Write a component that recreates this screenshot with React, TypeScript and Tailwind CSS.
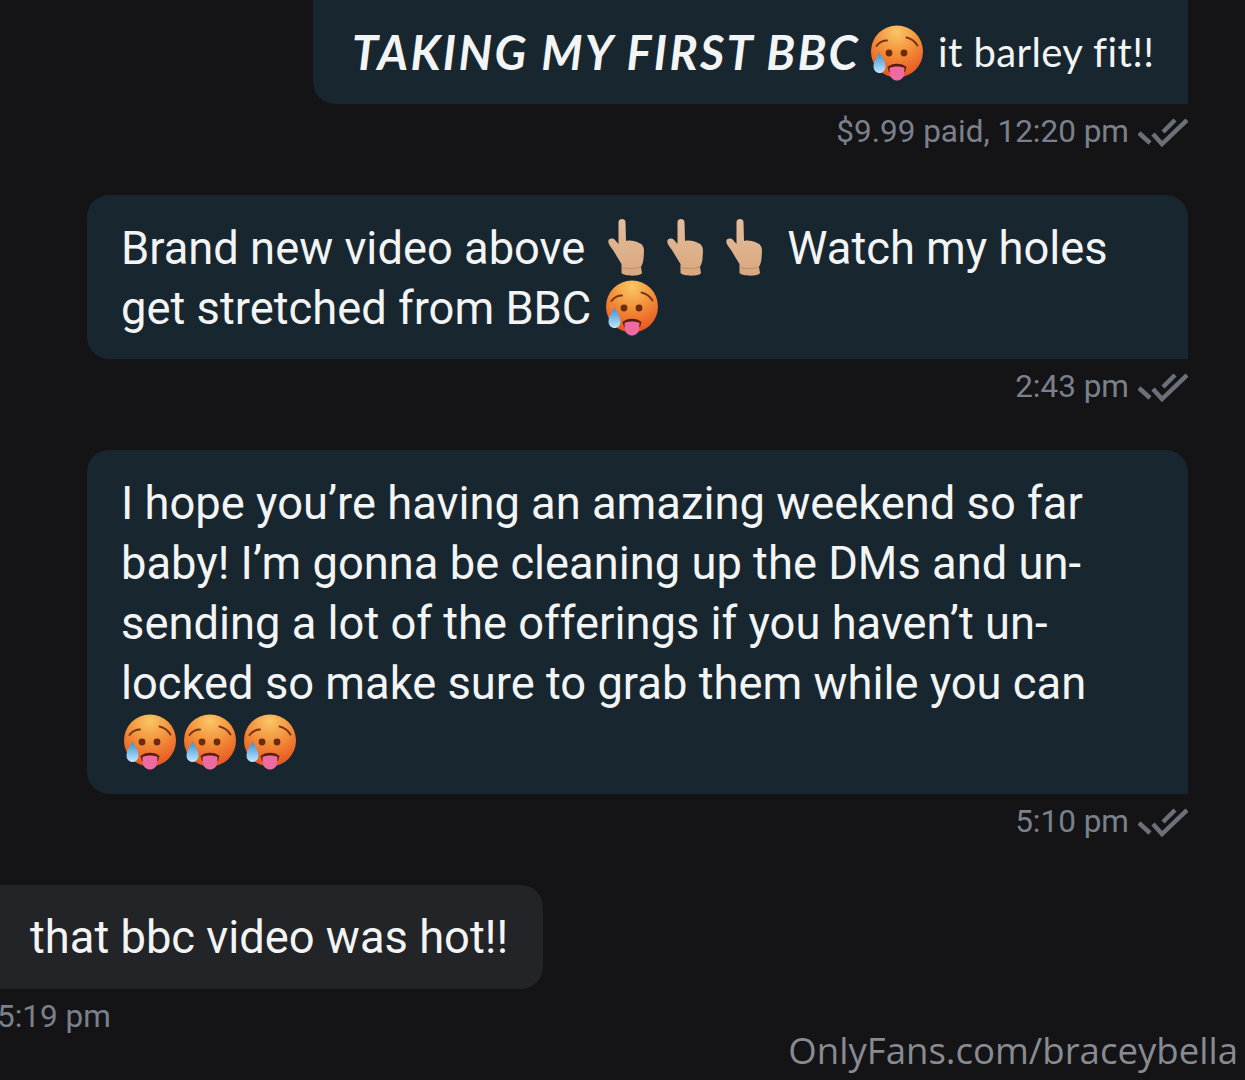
import { useId } from 'react'

function HotFace({ className = '' }: { className?: string }) {
  const id = useId()
  return (
    <svg viewBox="0 0 54 56" className={`inline-block w-[54px] h-[56px] ${className}`}>
      <defs>
        <radialGradient id={`${id}f`} cx="50%" cy="12%" r="90%">
          <stop offset="0%" stopColor="#f9c765" />
          <stop offset="50%" stopColor="#f28c38" />
          <stop offset="100%" stopColor="#e6511f" />
        </radialGradient>
        <linearGradient id={`${id}d`} x1="0" y1="0" x2="0" y2="1">
          <stop offset="0%" stopColor="#2f8fd8" />
          <stop offset="100%" stopColor="#bfe6fb" />
        </linearGradient>
      </defs>
      <circle cx="27" cy="26.5" r="26" fill={`url(#${id}f)`} />
      <path d="M6.5 21 C9.5 17 13 15.5 17 15.5M36.5 12.5 C41 13.5 45 16.5 47.5 20.5" fill="none" stroke="#7a3413" strokeWidth="2" strokeLinecap="round" />
      <circle cx="19" cy="28" r="3.4" fill="#6d2b0e" />
      <circle cx="34" cy="28" r="3.4" fill="#6d2b0e" />
      <path d="M17.5 42 C22 37.5 32 37.5 36.5 42 L35 47 L19 47 Z" fill="#5a1c0c" />
      <path d="M19.5 43 C23 41 31 41 34.5 43 L34 50 C33 54 29.5 55.5 27 55.5 C24.5 55.5 21 54 20 50 Z" fill="#ee6aa3" />
      <path d="M9.5 27 C11 32 15.5 36 15.5 41.5 C15.5 45.5 12.8 48 9.7 48 C6.4 48 3.5 45.5 3.5 41.5 C3.5 36 8 32 9.5 27 Z" fill={`url(#${id}d)`} />
    </svg>
  )
}

function PointDown({ className = '' }: { className?: string }) {
  const id = useId()
  return (
    <svg viewBox="0 0 36 58" className={`inline-block w-9 h-[58px] ${className}`}>
      <defs>
        <linearGradient id={`${id}h`} x1="0" y1="0" x2="0" y2="1">
          <stop offset="0%" stopColor="#e3bd9b" />
          <stop offset="100%" stopColor="#d9a77f" />
        </linearGradient>
      </defs>
      <path
        d="M10.5 3 C10.5 -1 17.5 -1 17.5 3 L18 22 C22 21 28 22 31 24 C34.5 25 36 28 36 32 L35.5 40 C35 44 34 46 33 48 L34 54 C33 57.5 16 57.5 13.5 54 L13.5 45 C11 41 8 36 5 31 C3 28 0 25 0.3 22 C1 19 5 19 7 21 L10.5 25 Z"
        fill={`url(#${id}h)`}
      />
      <path d="M13.5 48.5 C19 50 28 50 33 48" fill="none" stroke="#c08f68" strokeWidth="1" />
    </svg>
  )
}

function DoubleCheck() {
  return (
    <svg viewBox="0 0 50 30" className="w-[50px] h-[30px] shrink-0" fill="none" stroke="#6b7079" strokeWidth="4.5">
      <path d="M1 16 L12 26" />
      <path d="M15 17 L24 27 L49 3" />
      <path d="M25 15 L37 3" />
    </svg>
  )
}

function Meta({ time }: { time: string }) {
  return (
    <div className="flex items-center justify-end gap-[9px] h-[55px] mb-[36px] text-[31.5px] leading-none text-[#7b818c]">
      <span>{time}</span>
      <DoubleCheck />
    </div>
  )
}

export default function App() {
  return (
    <div className="relative w-[1245px] h-[1080px] overflow-hidden bg-[#141416] font-['Roboto',sans-serif] text-[#f3f4f4]">
      <div className="flex flex-col pr-[57px] -mt-[20px]">
        {/* Outgoing messages */}
        <div className="self-end w-[875px] h-[124px] flex items-end pb-[24px] pl-[39px] bg-[#182630] rounded-l-[22px]">
          <span className="font-['Lato',sans-serif] font-bold italic text-[47px] tracking-[2.3px] leading-[56px] whitespace-nowrap">TAKING MY FIRST BBC</span>
          <HotFace className="ml-[10px] mb-[-1px]" />
          <span className="ml-[14px] font-['Lato',sans-serif] text-[40px] tracking-[0.4px] [font-variant-ligatures:none] leading-[56px] whitespace-nowrap">it barley fit!!</span>
        </div>
        <Meta time="$9.99 paid, 12:20 pm" />

        <div className="self-end w-[1101px] pl-[34px] pt-[24px] pb-[20px] bg-[#182630] rounded-tl-[22px] rounded-tr-[22px] rounded-bl-[22px] text-[45.3px] leading-[60px]">
          <div className="flex items-center h-[60px] whitespace-nowrap">
            Brand new video above
            <PointDown className="ml-[23px] -mt-[2px]" />
            <PointDown className="ml-[23px] -mt-[2px]" />
            <PointDown className="ml-[23px] -mt-[2px]" />
            <span className="ml-[25px]">Watch my holes</span>
          </div>
          <div className="flex items-center h-[60px] whitespace-nowrap">
            get stretched from BBC
            <HotFace className="ml-[14px] -mt-[2px]" />
          </div>
        </div>
        <Meta time="2:43 pm" />

        <div className="self-end w-[1101px] pl-[34px] pt-[24px] pb-[22px] bg-[#182630] rounded-tl-[22px] rounded-tr-[22px] rounded-bl-[22px] text-[45.3px] leading-[60px] whitespace-nowrap">
          <div>I hope you’re having an amazing weekend so far</div>
          <div>baby! I’m gonna be cleaning up the DMs and un-</div>
          <div>sending a lot of the offerings if you haven’t un-</div>
          <div>locked so make sure to grab them while you can</div>
          <div className="flex items-center h-[60px] gap-[6px] pl-[2px] -mt-[2px]">
            <HotFace />
            <HotFace />
            <HotFace />
          </div>
        </div>
        <Meta time="5:10 pm" />

        {/* Incoming */}
        <div className="-ml-[20px] self-start pl-[50px] pr-[35px] pt-[23px] pb-[21px] bg-[#232428] rounded-[22px] text-[45.3px] leading-[60px] whitespace-nowrap">
          that bbc video was hot!!
        </div>
        <div className="-ml-[3px] mt-[8px] text-[31.5px] leading-[40px] text-[#7b818c]">5:19 pm</div>
      </div>

      {/* Watermark */}
      <div className="absolute right-[7px] bottom-[6px] font-['Open_Sans',sans-serif] text-[36.6px] leading-[48px] text-[#888b91] whitespace-nowrap">
        OnlyFans.com/braceybella
      </div>
    </div>
  )
}
